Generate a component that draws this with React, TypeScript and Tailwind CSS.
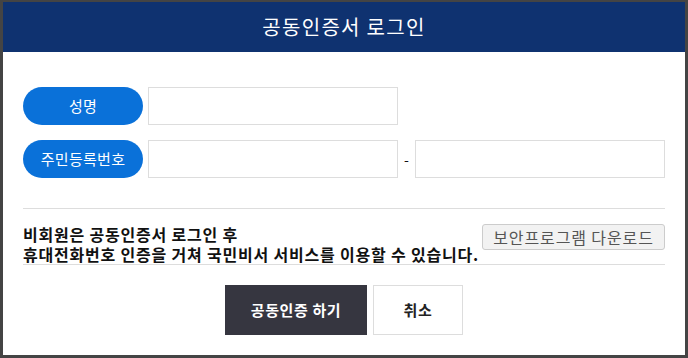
export default function App() {
  return (
    <div
      className="h-[358px] w-[688px] border-[#444444] border-t-2 border-l-[3px] border-r-[3px] border-b-[3px] bg-white"
      style={{ fontFamily: '"Noto Sans CJK KR", "Noto Sans", sans-serif' }}
    >
      <div className="flex h-[50px] items-center justify-center bg-[#0f3270] text-[20px] tracking-[1.3px] text-white">
        공동인증서 로그인
      </div>

      <div className="px-5 pt-[35px]">
        <div className="flex items-center">
          <div className="flex h-[38px] w-[120px] items-center justify-center rounded-full bg-[#0a71d9] text-[15px] tracking-[0.3px] text-white">
            성명
          </div>
          <input className="ml-[5px] h-[38px] w-[250px] border border-[#dddddd] outline-none" />
        </div>
        <div className="mt-[15px] flex items-center">
          <div className="flex h-[38px] w-[120px] items-center justify-center rounded-full bg-[#0a71d9] text-[15px] tracking-[0.3px] text-white">
            주민등록번호
          </div>
          <input className="ml-[5px] h-[38px] w-[250px] border border-[#dddddd] outline-none" />
          <span className="w-[17px] text-center text-[14px] text-[#111]">-</span>
          <input className="h-[38px] w-[250px] border border-[#dddddd] outline-none" />
        </div>

        <div className="mt-[30px] flex items-start border-y border-[#dddddd] pt-[15px]">
          <p className="min-w-0 flex-1 whitespace-nowrap text-[16px] font-semibold leading-[20px] tracking-[0.8px] text-[#111]">
            비회원은 공동인증서 로그인 후
            <br />
            휴대전화번호 인증을 거쳐 국민비서 서비스를 이용할 수 있습니다.
          </p>
          <button className="h-[26px] w-[183px] shrink-0 rounded-[3px] border border-[#cccccc] bg-[#f2f2f2] text-[16px] tracking-[0.9px] text-[#555555]">
            보안프로그램 다운로드
          </button>
        </div>

        <div className="mt-5 flex justify-center gap-[6px]">
          <button className="h-[50px] w-[142px] bg-[#363640] text-[15px] font-bold tracking-[0.6px] text-white">
            공동인증 하기
          </button>
          <button className="h-[50px] w-[90px] border border-[#dddddd] bg-white text-[15px] font-bold tracking-[0.6px] text-[#222]">
            취소
          </button>
        </div>
      </div>
    </div>
  );
}
